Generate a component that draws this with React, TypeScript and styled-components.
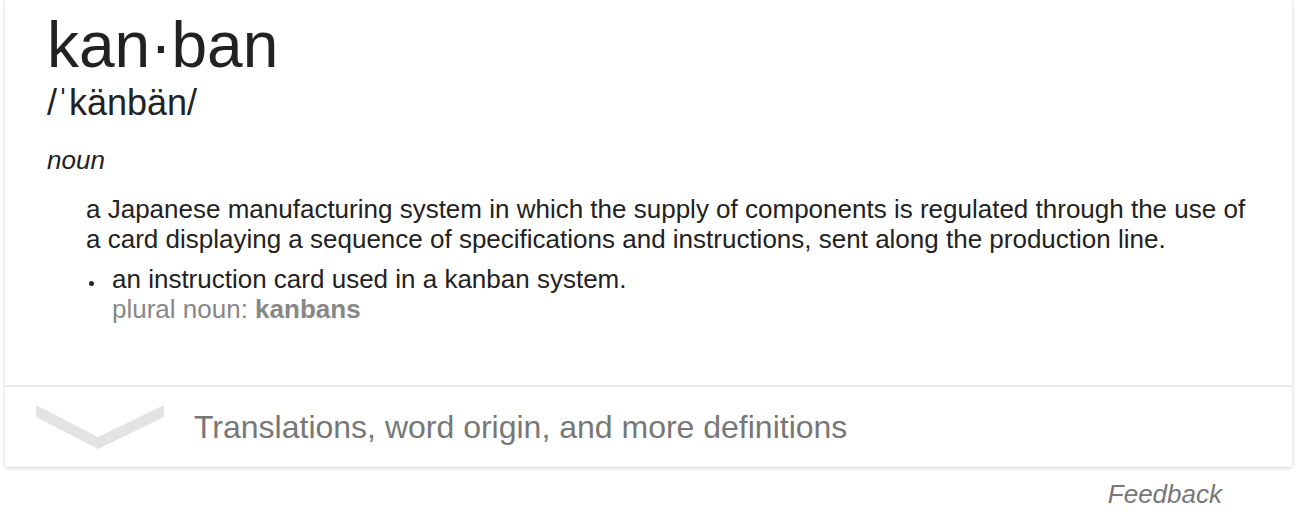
import React from "react";
import styled, { createGlobalStyle } from "styled-components";

const Global = createGlobalStyle`
  html, body { margin: 0; padding: 0; background: #fff; }
  body { font-family: "Liberation Sans", Arial, sans-serif; color: #222; }
`;

const Page = styled.div`
  width: 1304px;
  display: flex;
  flex-direction: column;
`;

const Card = styled.div`
  margin: 0 12px 0 5px;
  background: #fff;
  box-shadow: 0 1px 4px rgba(0, 0, 0, 0.18);
  display: flex;
  flex-direction: column;
`;

const Body = styled.div`
  padding: 9px 36px 61px 42px;
`;

const Word = styled.div`
  font-size: 64px;
  line-height: 72px;
  color: #222;
`;

const Pron = styled.div`
  font-size: 36px;
  line-height: 43px;
  color: #222;
`;

const Pos = styled.div`
  margin-top: 21px;
  font-size: 26px;
  font-style: italic;
  line-height: 30px;
  color: #222;
`;

const Defs = styled.ol`
  list-style: none;
  margin: 19px 0 0;
  padding: 0 0 0 39px;
  display: flex;
  flex-direction: column;
  gap: 10px;
`;

const Def = styled.li<{ $bullet?: boolean }>`
  position: relative;
  font-size: 26px;
  line-height: 30px;
  color: #222;
  padding-left: ${(p) => (p.$bullet ? "26px" : "0")};
  &::before {
    content: "";
    display: ${(p) => (p.$bullet ? "block" : "none")};
    position: absolute;
    left: 3px;
    top: 17px;
    width: 5px;
    height: 5px;
    border-radius: 50%;
    background: #222;
  }
`;

const Plural = styled.div`
  color: #878787;
`;

const Bold = styled.b`
  font-weight: bold;
`;

const Footer = styled.div`
  border-top: 2px solid #ebebeb;
  height: 80px;
  display: flex;
  align-items: center;
`;

const Chevron = styled.svg`
  width: 128px;
  height: 44px;
  margin-left: 31px;
  margin-right: 30px;
  flex: none;
`;

const More = styled.span`
  font-size: 32px;
  color: #777;
`;

const Feedback = styled.div`
  align-self: flex-end;
  margin: 12px 82px 0 0;
  font-size: 26px;
  font-style: italic;
  color: #777;
`;

export default function App() {
  return (
    <Page>
      <Global />
      <Card>
        <Body>
          <Word>kan·ban</Word>
          <Pron>/ˈkänbän/</Pron>
          <Pos>noun</Pos>
          <Defs>
            <Def>
              a Japanese manufacturing system in which the supply of components is regulated through the use of a card
              displaying a sequence of specifications and instructions, sent along the production line.
            </Def>
            <Def $bullet>
              an instruction card used in a kanban system.
              <Plural>
                plural noun: <Bold>kanbans</Bold>
              </Plural>
            </Def>
          </Defs>
        </Body>
        <Footer>
          <Chevron viewBox="0 0 128 44">
            <polygon points="0,0 0,12 62,44 128,12 128,0 62,32" fill="#e3e3e3" />
          </Chevron>
          <More>Translations, word origin, and more definitions</More>
        </Footer>
      </Card>
      <Feedback>Feedback</Feedback>
    </Page>
  );
}
